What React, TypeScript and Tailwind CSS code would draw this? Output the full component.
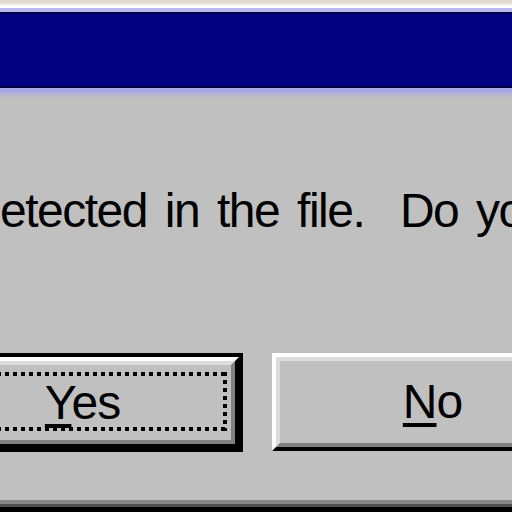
import React from "react";

// zoomed-in Win95 message box: "Yes" is the default button (black frame + focus rect)
const FocusRect = () => (
  <div className="absolute top-[7px] left-[7px] right-[4px] bottom-[9px]">
    <div className="absolute top-0 left-0 right-0 h-[4px] bg-[repeating-linear-gradient(90deg,#000_0_4px,transparent_4px_8px)]" />
    <div className="absolute bottom-0 left-0 right-0 h-[4px] bg-[repeating-linear-gradient(90deg,#000_0_4px,transparent_4px_8px)]" />
    <div className="absolute top-0 bottom-0 left-0 w-[4px] bg-[repeating-linear-gradient(180deg,#000_0_4px,transparent_4px_8px)]" />
    <div className="absolute top-0 bottom-0 right-0 w-[4px] bg-[repeating-linear-gradient(180deg,#000_0_4px,transparent_4px_8px)]" />
  </div>
);

const Yes = () => (
  <div className="w-[321px] h-[99px] border-4 border-black shrink-0">
    <div className="h-full border-t-4 border-l-4 border-t-white border-l-white border-r-4 border-b-4 border-r-black border-b-black">
      <div className="relative h-full border-t-4 border-l-4 border-t-[#dcdcdc] border-l-[#dcdcdc] border-r-4 border-b-4 border-r-[#808080] border-b-[#808080] flex items-center justify-center">
        <FocusRect />
        <span className="text-[48px] leading-none tracking-[-1px]">
          <span className="underline decoration-[4px] underline-offset-[5px]">Y</span>es
        </span>
      </div>
    </div>
  </div>
);

const No = () => (
  <div className="w-[321px] h-[98px] shrink-0 border-t-4 border-l-4 border-t-white border-l-white border-r-4 border-b-4 border-r-black border-b-black">
    <div className="h-full border-t-4 border-l-4 border-t-[#dcdcdc] border-l-[#dcdcdc] border-r-4 border-b-4 border-r-[#808080] border-b-[#808080] flex items-center justify-center">
      <span className="text-[48px] leading-none tracking-[-1px]">
        <span className="underline decoration-[4px] underline-offset-[5px]">N</span>o
      </span>
    </div>
  </div>
);

export default function App() {
  return (
    <div className="w-[512px] h-[512px] overflow-hidden bg-[#c0c0c0] flex flex-col text-black font-['Liberation_Sans',Arial,sans-serif]">
      {/* window frame + title bar */}
      <div className="h-[3px] bg-[#dcd8d0]" />
      <div className="h-[2px] bg-[#ebe7df]" />
      <div className="h-[3px] bg-[#fffdf8]" />
      <div className="h-[4px] bg-[#b8b8f0]" />
      <div className="h-[2px] bg-[#000040]" />
      <div className="h-[72px] bg-[#000080]" />
      <div className="h-[2px] bg-[#000040]" />
      <div className="h-[5px] bg-[#a8a8e8]" />
      <div className="h-[4px] bg-[#b8b8cc]" />

      {/* message */}
      <div className="mt-[90px] h-[48px] text-[48px] leading-none whitespace-nowrap tracking-[-1.5px] [word-spacing:6px]">
        etected in the file.&nbsp; Do you
      </div>

      {/* buttons */}
      <div className="mt-[118px] ml-[-78px] flex gap-[29px] items-start">
        <Yes />
        <No />
      </div>

      <div className="flex-1" />
      <div className="h-[4px] bg-[#888888]" />
      <div className="h-[3px] bg-[#505050]" />
      <div className="h-[5px] bg-black" />
    </div>
  );
}
